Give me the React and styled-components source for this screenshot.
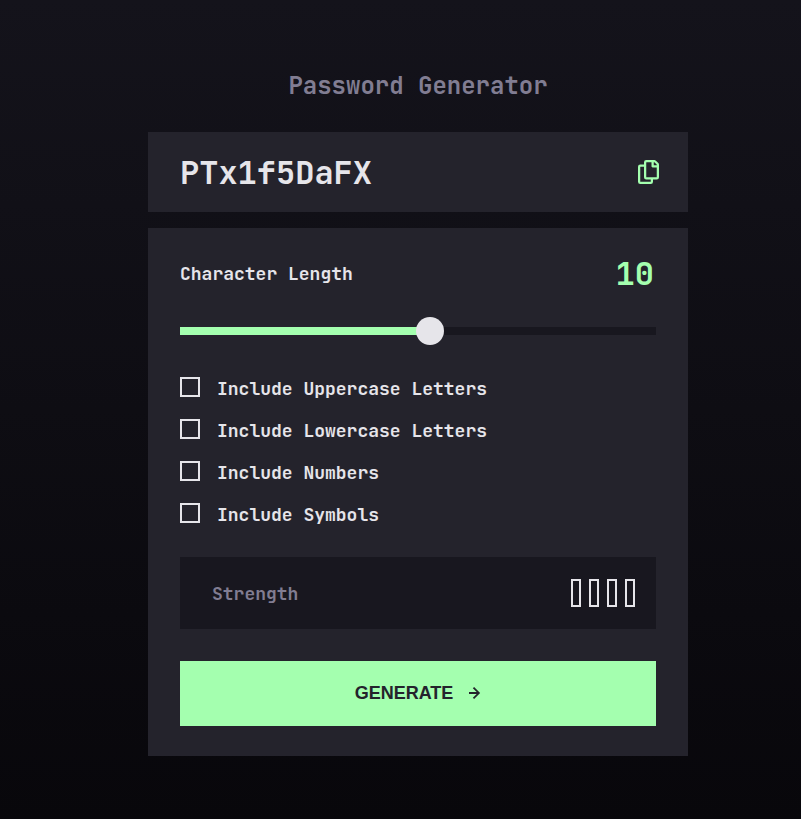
import React, { useState } from "react";
import styled, { createGlobalStyle } from "styled-components";

const GlobalStyle = createGlobalStyle`
  * { box-sizing: border-box; }
  body { margin: 0; background: #08070b; }
`;

const Page = styled.main`
  width: 100%;
  height: 819px;
  overflow: hidden;
  padding: 70px 113px 0 148px;
  background: linear-gradient(180deg, #14131b 0%, #08070b 100%);
  color: #e6e5ea;
  font-family: "JetBrains Mono", "DejaVu Sans Mono", monospace;
  font-weight: 700;
`;

const Title = styled.h1`
  margin: 0 0 30px;
  height: 32px;
  font-size: 24px;
  line-height: 32px;
  font-weight: 700;
  text-align: center;
  color: #817d92;
`;

const PasswordPanel = styled.section`
  display: flex;
  align-items: center;
  justify-content: space-between;
  height: 80px;
  padding: 0 29px 0 32px;
  margin-bottom: 16px;
  background: #24232c;
`;

const Password = styled.output`
  padding-top: 2px;
  font-size: 32px;
  line-height: 42px;
`;

const IconButton = styled.button`
  display: flex;
  padding: 0;
  border: 0;
  background: none;
  color: #a4ffaf;
  cursor: pointer;
`;

const SettingsPanel = styled.section`
  height: 528px;
  padding: 24px 32px 30px;
  background: #24232c;
`;

const LengthRow = styled.div`
  display: flex;
  align-items: center;
  justify-content: space-between;
  height: 44px;
`;

const Label = styled.span`
  font-size: 18px;
  line-height: 24px;
  color: ${({ $muted }) => ($muted ? "#817d92" : "#e6e5ea")};
`;

const LengthValue = styled.output`
  padding-right: 2px;
  font-size: 32px;
  line-height: 42px;
  color: #a4ffaf;
`;

const Slider = styled.input`
  display: block;
  appearance: none;
  width: 100%;
  height: 28px;
  margin: 21px 0 32px;
  background: linear-gradient(
      to right,
      #a4ffaf ${({ $fill }) => $fill}%,
      #18171f ${({ $fill }) => $fill}%
    )
    center / 100% 8px no-repeat;
  &::-webkit-slider-thumb {
    appearance: none;
    width: 28px;
    height: 28px;
    border-radius: 50%;
    background: #e6e5ea;
  }
`;

const Options = styled.div`
  display: grid;
  grid-auto-rows: 20px;
  row-gap: 22px;
`;

const Option = styled.label`
  display: flex;
  align-items: center;
  gap: 17px;
`;

const OptionText = styled(Label)`
  padding-top: 3px;
`;

const Checkbox = styled.input`
  appearance: none;
  width: 20px;
  height: 20px;
  margin: 0;
  border: 2px solid #e6e5ea;
  &:checked { background: #a4ffaf; border-color: #a4ffaf; }
`;

const StrengthBox = styled.div`
  display: flex;
  align-items: center;
  justify-content: space-between;
  height: 72px;
  margin: 34px 0 32px;
  padding: 0 21px 0 32px;
  background: #18171f;
`;

const StrengthLabel = styled(Label)`
  padding-top: 2px;
`;

const Meter = styled.div`
  display: flex;
  gap: 8px;
`;

const MeterBar = styled.span`
  width: 10px;
  height: 28px;
  border: 2px solid #e6e5ea;
`;

const GenerateButton = styled.button`
  display: flex;
  align-items: center;
  justify-content: center;
  gap: 16px;
  width: 100%;
  height: 65px;
  padding: 0 0 2px;
  border: 0;
  background: #a4ffaf;
  color: #24232c;
  font: 700 18px/21px "Liberation Sans", Arial, sans-serif;
  cursor: pointer;
`;

const GenerateText = styled.span`
  padding-top: 2px;
`;

const CopyIcon = () => (
  <svg width="21" height="24" fill="currentColor" aria-hidden="true">
    <path d="M20.341 3.091 17.909.659A2.25 2.25 0 0 0 16.319 0H8.25A2.25 2.25 0 0 0 6 2.25V4.5H2.25A2.25 2.25 0 0 0 0 6.75v15A2.25 2.25 0 0 0 2.25 24h10.5A2.25 2.25 0 0 0 15 21.75V19.5h3.75A2.25 2.25 0 0 0 21 17.25V4.682a2.25 2.25 0 0 0-.659-1.591ZM12.469 21.75H2.53a.281.281 0 0 1-.281-.281V7.03a.281.281 0 0 1 .281-.281H6v10.5a2.25 2.25 0 0 0 2.25 2.25h4.5v1.969a.282.282 0 0 1-.281.281Zm6-4.5H8.53a.281.281 0 0 1-.281-.281V2.53a.281.281 0 0 1 .281-.281H13.5v4.125c0 .621.504 1.125 1.125 1.125h4.125v9.469a.282.282 0 0 1-.281.281Zm.281-12h-3v-3h.451c.075 0 .147.03.2.082L18.667 4.6a.283.283 0 0 1 .082.199v.451Z" />
  </svg>
);

const ArrowIcon = () => (
  <svg width="12" height="12" fill="currentColor" aria-hidden="true">
    <path d="m5.106 12 6-6-6-6-1.265 1.265 3.841 3.84H.001v1.79h7.681l-3.841 3.84z" />
  </svg>
);

const OPTIONS = [
  "Include Uppercase Letters",
  "Include Lowercase Letters",
  "Include Numbers",
  "Include Symbols",
];

const MIN = 0;
const MAX = 19;

export default function App() {
  const [length, setLength] = useState(10);
  return (
    <>
      <GlobalStyle />
      <Page>
        <Title>Password Generator</Title>
        <PasswordPanel>
          <Password>PTx1f5DaFX</Password>
          <IconButton aria-label="Copy password">
            <CopyIcon />
          </IconButton>
        </PasswordPanel>
        <SettingsPanel>
          <LengthRow>
            <Label>Character Length</Label>
            <LengthValue>{length}</LengthValue>
          </LengthRow>
          <Slider
            type="range"
            aria-label="Character Length"
            min={MIN}
            max={MAX}
            value={length}
            $fill={((length - MIN) / (MAX - MIN)) * 100}
            onChange={(e) => setLength(Number(e.target.value))}
          />
          <Options>
            {OPTIONS.map((text) => (
              <Option key={text}>
                <Checkbox type="checkbox" />
                <OptionText>{text}</OptionText>
              </Option>
            ))}
          </Options>
          <StrengthBox>
            <StrengthLabel $muted>Strength</StrengthLabel>
            <Meter>
              {[1, 2, 3, 4].map((level) => (
                <MeterBar key={level} />
              ))}
            </Meter>
          </StrengthBox>
          <GenerateButton>
            <GenerateText>GENERATE</GenerateText>
            <ArrowIcon />
          </GenerateButton>
        </SettingsPanel>
      </Page>
    </>
  );
}
